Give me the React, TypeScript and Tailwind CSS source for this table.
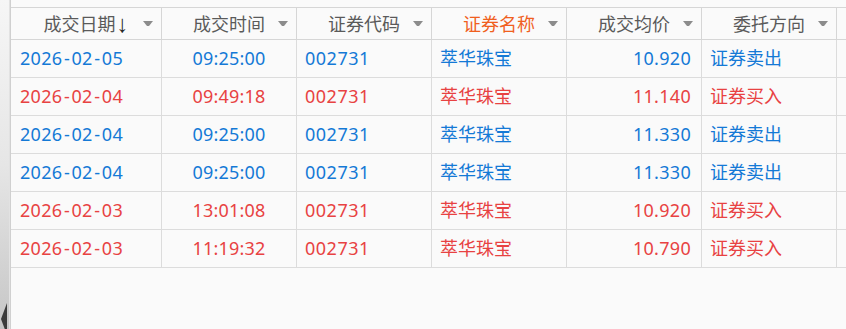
import React from "react";

type Row = {
  date: string;
  time: string;
  code: string;
  name: string;
  price: string;
  dir: string;
  buy: boolean;
};

const rows: Row[] = [
  { date: "2026-02-05", time: "09:25:00", code: "002731", name: "萃华珠宝", price: "10.920", dir: "证券卖出", buy: false },
  { date: "2026-02-04", time: "09:49:18", code: "002731", name: "萃华珠宝", price: "11.140", dir: "证券买入", buy: true },
  { date: "2026-02-04", time: "09:25:00", code: "002731", name: "萃华珠宝", price: "11.330", dir: "证券卖出", buy: false },
  { date: "2026-02-04", time: "09:25:00", code: "002731", name: "萃华珠宝", price: "11.330", dir: "证券卖出", buy: false },
  { date: "2026-02-03", time: "13:01:08", code: "002731", name: "萃华珠宝", price: "10.920", dir: "证券买入", buy: true },
  { date: "2026-02-03", time: "11:19:32", code: "002731", name: "萃华珠宝", price: "10.790", dir: "证券买入", buy: true },
];

function Caret() {
  return (
    <svg className="absolute right-[8px] top-[13px]" width="10" height="6" viewBox="0 0 10 6">
      <path d="M0 0 H10 L6 5 H4 Z" fill="#8c8c8c" />
    </svg>
  );
}

function Head({ children, orange }: { children: React.ReactNode; orange?: boolean }) {
  return (
    <div
      className={`relative flex h-[32px] items-center justify-center border-b border-r border-[#d6d6d6] ${
        orange ? "text-[#f0601e]" : "text-[#5a5a5a]"
      }`}
    >
      <span className="flex items-center leading-none">{children}</span>
      <Caret />
    </div>
  );
}

function DateText({ d }: { d: string }) {
  const parts = d.split("-");
  return (
    <span>
      {parts.map((p, i) => (
        <React.Fragment key={i}>
          {i > 0 && <span className="px-[1.5px]">-</span>}
          {p}
        </React.Fragment>
      ))}
    </span>
  );
}

export default function App() {
  return (
    <div
      className="flex h-[329px] w-[846px] overflow-hidden bg-[#fafafa] text-[18px]"
      style={{ fontFamily: '"Noto Sans", "Noto Sans CJK SC", sans-serif' }}
    >
      <div className="relative h-full w-[10px] border-r border-[#e2e2e2] bg-gradient-to-b from-[#f6f6f6] via-[#e6e6e6] to-[#c6c6c6]">
        <svg className="absolute left-0 top-[303px]" width="9" height="32" viewBox="0 0 9 32">
          <path d="M7 0 L7 32 L1 16 Z" fill="#3c3c3c" />
        </svg>
      </div>
      <div className="h-full flex-1 border-l border-[#d0d0d0] pt-[7px]">
        <div className="grid grid-cols-[151px_135px_135px_135px_135px_135px_1fr] border-t border-[#d6d6d6]">
          <Head>
            成交日期
            <span
              className="ml-[1px] text-[24px] leading-none text-[#2a2a2a]"
              style={{ fontFamily: '"Liberation Sans", sans-serif' }}
            >
              ↓
            </span>
          </Head>
          <Head>成交时间</Head>
          <Head>证券代码</Head>
          <Head orange>证券名称</Head>
          <Head>成交均价</Head>
          <Head>委托方向</Head>
          <div className="h-[32px] border-b border-[#d6d6d6]" />
          {rows.map((r, i) => {
            const c = r.buy ? "text-[#e84242]" : "text-[#1479d6]";
            const cell = `flex h-[38px] items-center border-b border-r border-[#dcdcdc] ${c}`;
            return (
              <React.Fragment key={i}>
                <div className={`${cell} pl-[9px] tracking-[0.3px]`}>
                  <DateText d={r.date} />
                </div>
                <div className={`${cell} justify-center tracking-[0.2px]`}>{r.time}</div>
                <div className={`${cell} pl-[8px] tracking-[0.5px]`}>{r.code}</div>
                <div className={`${cell} pl-[8px]`}>{r.name}</div>
                <div className={`${cell} justify-end pr-[10px] tracking-[0.3px]`}>{r.price}</div>
                <div className={`${cell} pl-[8px]`}>{r.dir}</div>
                <div className="h-[38px] border-b border-[#dcdcdc]" />
              </React.Fragment>
            );
          })}
        </div>
      </div>
    </div>
  );
}
